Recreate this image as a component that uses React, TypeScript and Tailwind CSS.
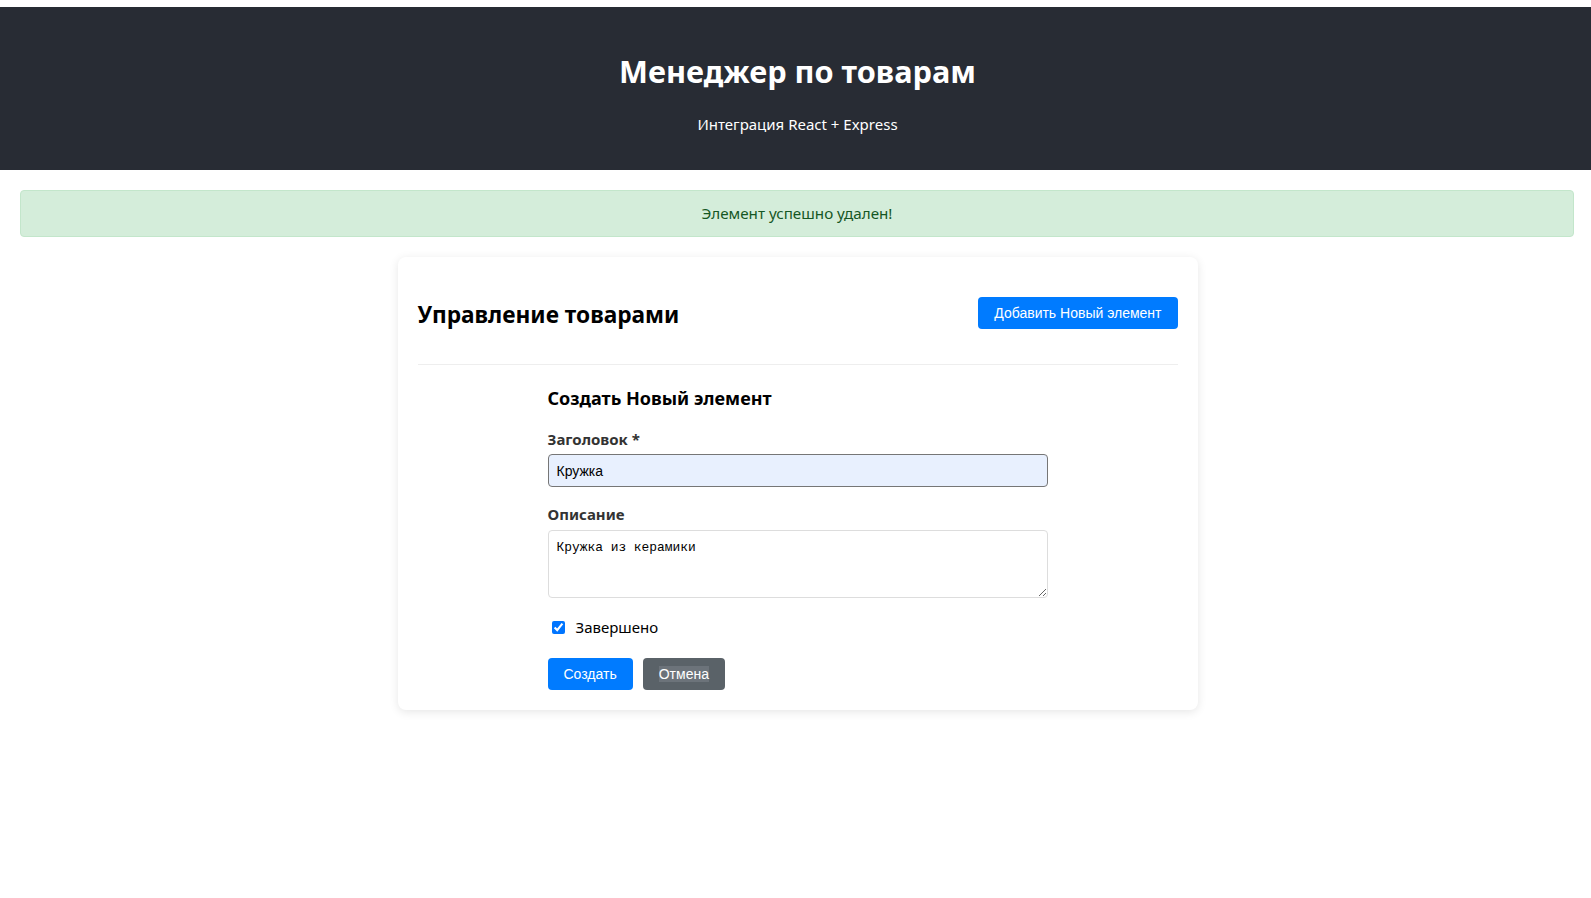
import { useState } from 'react';

const sans = "font-['Noto_Sans',sans-serif]";
const arial = "font-['Liberation_Sans',Arial,sans-serif]";

export default function App() {
  const [title, setTitle] = useState('Кружка');
  const [description, setDescription] = useState('Кружка из керамики');
  const [completed, setCompleted] = useState(true);

  return (
    <div className={`min-h-[898px] bg-white text-black ${sans}`}>
      {/* полоска над шапкой */}
      <div className="h-[7px] bg-white" />

      {/* шапка */}
      <header className="bg-[#282c34] pl-[4px] text-center text-white pt-[44px] pb-[34px]">
        <h1 className="text-[30.7px] leading-[40px] font-bold mb-[21px]">Менеджер по товарам</h1>
        <p className="text-[15px] leading-6">Интеграция React + Express</p>
      </header>

      <main className="pl-[4px]">
        {/* уведомление */}
        <div className="ml-[16px] mr-[17px] mt-5 rounded border border-[#c3e6cb] bg-[#d4edda] py-3 text-center text-[15.2px] leading-[21px] text-[#155724]">
          Элемент успешно удален!
        </div>

        {/* карточка */}
        <div className="mx-auto mt-5 w-[800px] rounded-lg bg-white p-5 shadow-[0_2px_10px_rgba(0,0,0,0.1)]">
          <div className="mb-5 flex items-center justify-between border-b border-[#eee] pb-[15px]">
            <h2 className="my-5 translate-y-[2px] text-[22.7px] leading-8 font-bold">Управление товарами</h2>
            <button className={`h-8 rounded bg-[#007bff] px-4 text-sm text-white ${arial}`}>
              Добавить Новый элемент
            </button>
          </div>

          <form className="mx-auto max-w-[500px]" onSubmit={e => e.preventDefault()}>
            <h3 className="mb-[17px] text-[18px] leading-[26px] font-bold">Создать Новый элемент</h3>

            <div className="mb-[17px]">
              <label className="mb-[5px] block translate-y-[1px] text-[15px] leading-[21px] font-bold text-[#333]">Заголовок *</label>
              <input
                type="text"
                value={title}
                onChange={e => setTitle(e.target.value)}
                className={`block h-[33px] w-full rounded border border-[#767676] bg-[#e8f0fe] px-2 text-[14px] text-black outline-none ${arial}`}
              />
            </div>

            <div className="mb-[17px]">
              <label className="mb-[5px] block text-[15px] leading-[21px] font-bold text-[#333]">Описание</label>
              <textarea
                value={description}
                onChange={e => setDescription(e.target.value)}
                className="block h-[68px] w-full resize-y rounded border border-[#ddd] px-2 pt-[9px] pb-[5px] font-['Liberation_Mono',monospace] text-[12.9px] leading-[16px] outline-none"
              />
            </div>

            <label className="mb-[19px] flex h-6 items-center text-[15px]">
              <input
                type="checkbox"
                checked={completed}
                onChange={e => setCompleted(e.target.checked)}
                className="ml-1 h-[13px] w-[13px] accent-[#0075ff]"
              />
              <span className="ml-[11px]">Завершено</span>
            </label>

            <div className={`flex gap-[10px] text-sm text-white ${arial}`}>
              <button type="submit" className="h-8 rounded bg-[#007bff] px-4">
                Создать
              </button>
              <button type="button" className="h-8 rounded bg-[#5a6268] px-4">
                <span className="bg-[#6c737a]">Отмена</span>
              </button>
            </div>
          </form>
        </div>
      </main>
    </div>
  );
}
